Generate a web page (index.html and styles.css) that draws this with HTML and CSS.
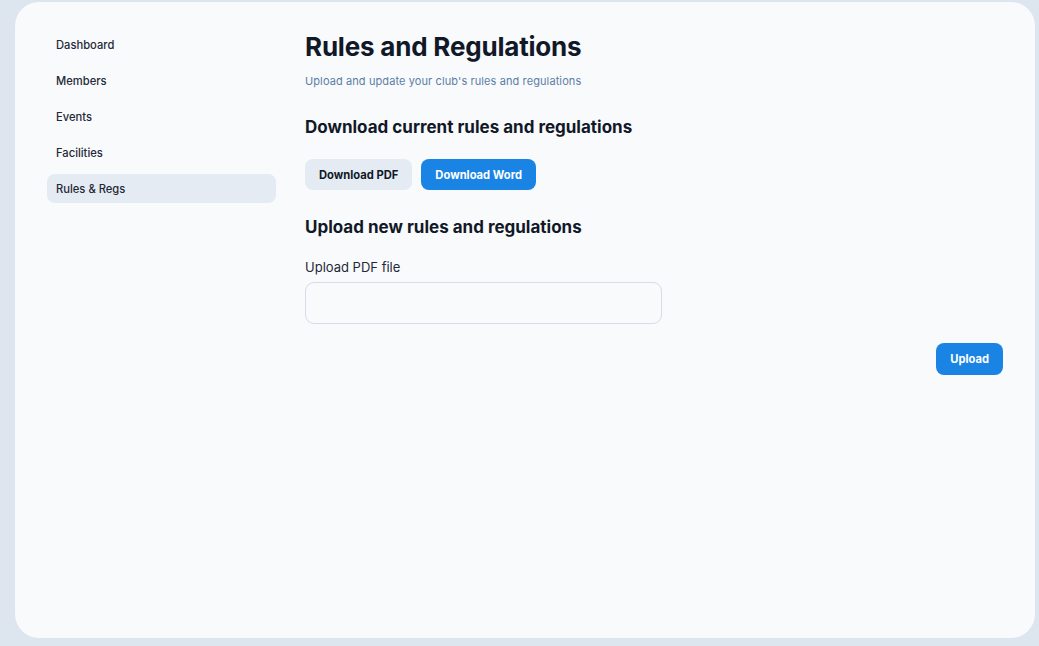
FILE: index.html
```html
<!DOCTYPE html>
<html lang="en">
<head>
<meta charset="utf-8">
<title>Rules and Regulations</title>
<link rel="stylesheet" href="styles.css">
</head>
<body>
<div class="card">
  <nav class="sidebar">
    <a class="nav-item">Dashboard</a>
    <a class="nav-item">Members</a>
    <a class="nav-item">Events</a>
    <a class="nav-item">Facilities</a>
    <a class="nav-item active">Rules &amp; Regs</a>
  </nav>
  <main class="main">
    <h1 class="title">Rules and Regulations</h1>
    <p class="subtitle">Upload and update your club's rules and regulations</p>
    <h2 class="section-title">Download current rules and regulations</h2>
    <div class="btn-row">
      <button class="btn btn-light">Download PDF</button>
      <button class="btn btn-primary">Download Word</button>
    </div>
    <h2 class="section-title upload-title">Upload new rules and regulations</h2>
    <label class="field-label">Upload PDF file</label>
    <div class="file-input"></div>
    <div class="actions">
      <button class="btn btn-primary btn-upload">Upload</button>
    </div>
  </main>
</div>
</body>
</html>
```
FILE: styles.css
```css
* { box-sizing: border-box; }
html, body { margin: 0; padding: 0; }
body {
  background: #dde5ee;
  font-family: Inter, "Noto Sans", sans-serif;
  color: #111827;
  width: 1039px;
  height: 646px;
  overflow: hidden;
}
.card {
  margin: 2px 0 0 15px;
  width: 1020px;
  height: 636px;
  background: #f8fafc;
  border-radius: 24px;
  display: flex;
  padding: 28px 32px 0 32px;
}
.sidebar {
  width: 229px;
  flex: none;
  display: flex;
  flex-direction: column;
  gap: 7px;
}
.nav-item {
  display: block;
  height: 29px;
  line-height: 31px;
  padding: 0 9px;
  font-size: 11.2px;
  font-weight: 500;
  color: #1f2937;
  border-radius: 8px;
}
.nav-item.active { background: #e5ebf3; }
.main {
  flex: 1;
  margin-left: 29px;
  padding-top: 1px;
  display: flex;
  flex-direction: column;
  align-items: flex-start;
}
.title {
  margin: 0;
  font-size: 26px;
  line-height: 32px;
  font-weight: 700;
  color: #111827;
  letter-spacing: -0.2px;
}
.subtitle {
  margin: 10px 0 0 0;
  font-size: 11px;
  line-height: 16px;
  color: #5b7ea6;
  letter-spacing: 0.1px;
}
.section-title {
  margin: 26px 0 0 0;
  font-size: 17px;
  line-height: 24px;
  font-weight: 700;
  color: #111827;
}
.btn-row {
  display: flex;
  gap: 9px;
  margin-top: 20px;
}
.btn {
  font-family: inherit;
  font-size: 11.2px;
  font-weight: 700;
  border: none;
  border-radius: 8px;
  height: 31px;
  padding: 0 14px;
  cursor: pointer;
}
.btn-light { background: #e5ebf3; color: #111827; }
.btn-primary { background: #1a84e5; color: #ffffff; }
.upload-title { margin-top: 25px; }
.field-label {
  margin-top: 19px;
  font-size: 13px;
  line-height: 18px;
  color: #1f2937;
}
.file-input {
  margin-top: 6px;
  width: 357px;
  height: 42px;
  border: 1px solid #d4dde8;
  border-radius: 9px;
  background: #f8fafc;
}
.actions {
  align-self: stretch;
  display: flex;
  justify-content: flex-end;
  margin-top: 19px;
}
.btn-upload { height: 32px; padding: 0 14px; }
```
